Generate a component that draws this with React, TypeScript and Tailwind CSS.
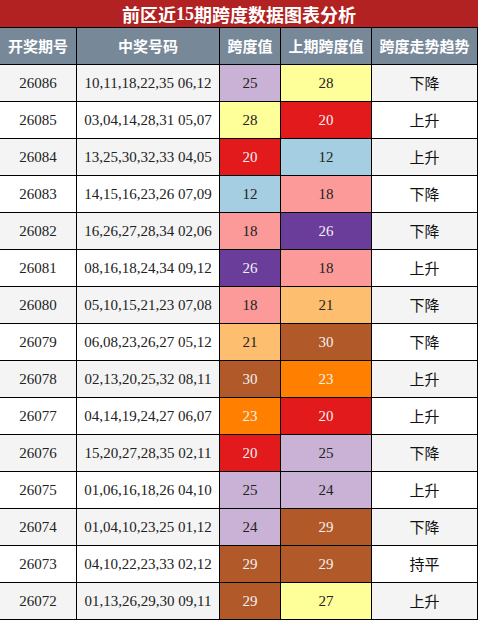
const rows: [string, string, number, number, string][] = [
  ['26086', '10,11,18,22,35 06,12', 25, 28, '下降'],
  ['26085', '03,04,14,28,31 05,07', 28, 20, '上升'],
  ['26084', '13,25,30,32,33 04,05', 20, 12, '上升'],
  ['26083', '14,15,16,23,26 07,09', 12, 18, '下降'],
  ['26082', '16,26,27,28,34 02,06', 18, 26, '下降'],
  ['26081', '08,16,18,24,34 09,12', 26, 18, '上升'],
  ['26080', '05,10,15,21,23 07,08', 18, 21, '下降'],
  ['26079', '06,08,23,26,27 05,12', 21, 30, '下降'],
  ['26078', '02,13,20,25,32 08,11', 30, 23, '上升'],
  ['26077', '04,14,19,24,27 06,07', 23, 20, '上升'],
  ['26076', '15,20,27,28,35 02,11', 20, 25, '下降'],
  ['26075', '01,06,16,18,26 04,10', 25, 24, '上升'],
  ['26074', '01,04,10,23,25 01,12', 24, 29, '下降'],
  ['26073', '04,10,22,23,33 02,12', 29, 29, '持平'],
  ['26072', '01,13,26,29,30 09,11', 29, 27, '上升'],
];

// span value -> cell colour
const spanStyle: Record<number, string> = {
  12: 'bg-[#a6cee3] text-[#222]',
  18: 'bg-[#fb9a99] text-[#222]',
  20: 'bg-[#e31a1c] text-[#f2f2f2]',
  21: 'bg-[#fdbf6f] text-[#222]',
  23: 'bg-[#ff7f00] text-[#f2f2f2]',
  24: 'bg-[#cab2d6] text-[#222]',
  25: 'bg-[#cab2d6] text-[#222]',
  26: 'bg-[#6a3d9a] text-[#f2f2f2]',
  27: 'bg-[#ffff99] text-[#222]',
  28: 'bg-[#ffff99] text-[#222]',
  29: 'bg-[#b15928] text-[#f2f2f2]',
  30: 'bg-[#b15928] text-[#f2f2f2]',
};

const serif = "font-['Liberation_Serif','Noto_Sans_CJK_SC',serif]";
const sans = "font-['Noto_Sans_CJK_SC','Liberation_Sans',sans-serif]";

export default function App() {
  return (
    <div className="w-[478px] h-[620px] bg-black overflow-hidden">
      <div className="h-[27px] bg-[#b22222] flex items-center justify-center text-white text-[18px] font-bold font-['Noto_Sans_CJK_SC',sans-serif] leading-none">
        前区近<span className={serif}>15</span>期跨度数据图表分析
      </div>
      <div className="grid grid-cols-[76px_142px_60px_90px_105px] gap-px pt-px pr-px pb-px">
        {['开奖期号', '中奖号码', '跨度值', '上期跨度值', '跨度走势趋势'].map((h) => (
          <div
            key={h}
            className={`h-[36px] bg-[#778899] text-white font-bold text-[15px] flex items-center justify-center ${sans}`}
          >
            {h}
          </div>
        ))}
        {rows.map(([issue, nums, span, prev, trend], i) => {
          const bg = i % 2 === 0 ? 'bg-[#f4f4f4]' : 'bg-white';
          return [
            <div key={issue + 'a'} className={`h-[36px] ${bg} text-[#222] text-[15px] flex items-center justify-center ${serif}`}>
              {issue}
            </div>,
            <div key={issue + 'b'} className={`h-[36px] ${bg} text-[#222] text-[15px] flex items-center justify-center ${serif}`}>
              {nums}
            </div>,
            <div key={issue + 'c'} className={`h-[36px] ${spanStyle[span]} text-[15px] flex items-center justify-center ${serif}`}>
              {span}
            </div>,
            <div key={issue + 'd'} className={`h-[36px] ${spanStyle[prev]} text-[15px] flex items-center justify-center ${serif}`}>
              {prev}
            </div>,
            <div key={issue + 'e'} className={`h-[36px] ${bg} text-[#111] text-[15px] flex items-center justify-center ${sans}`}>
              {trend}
            </div>,
          ];
        })}
      </div>
    </div>
  );
}
